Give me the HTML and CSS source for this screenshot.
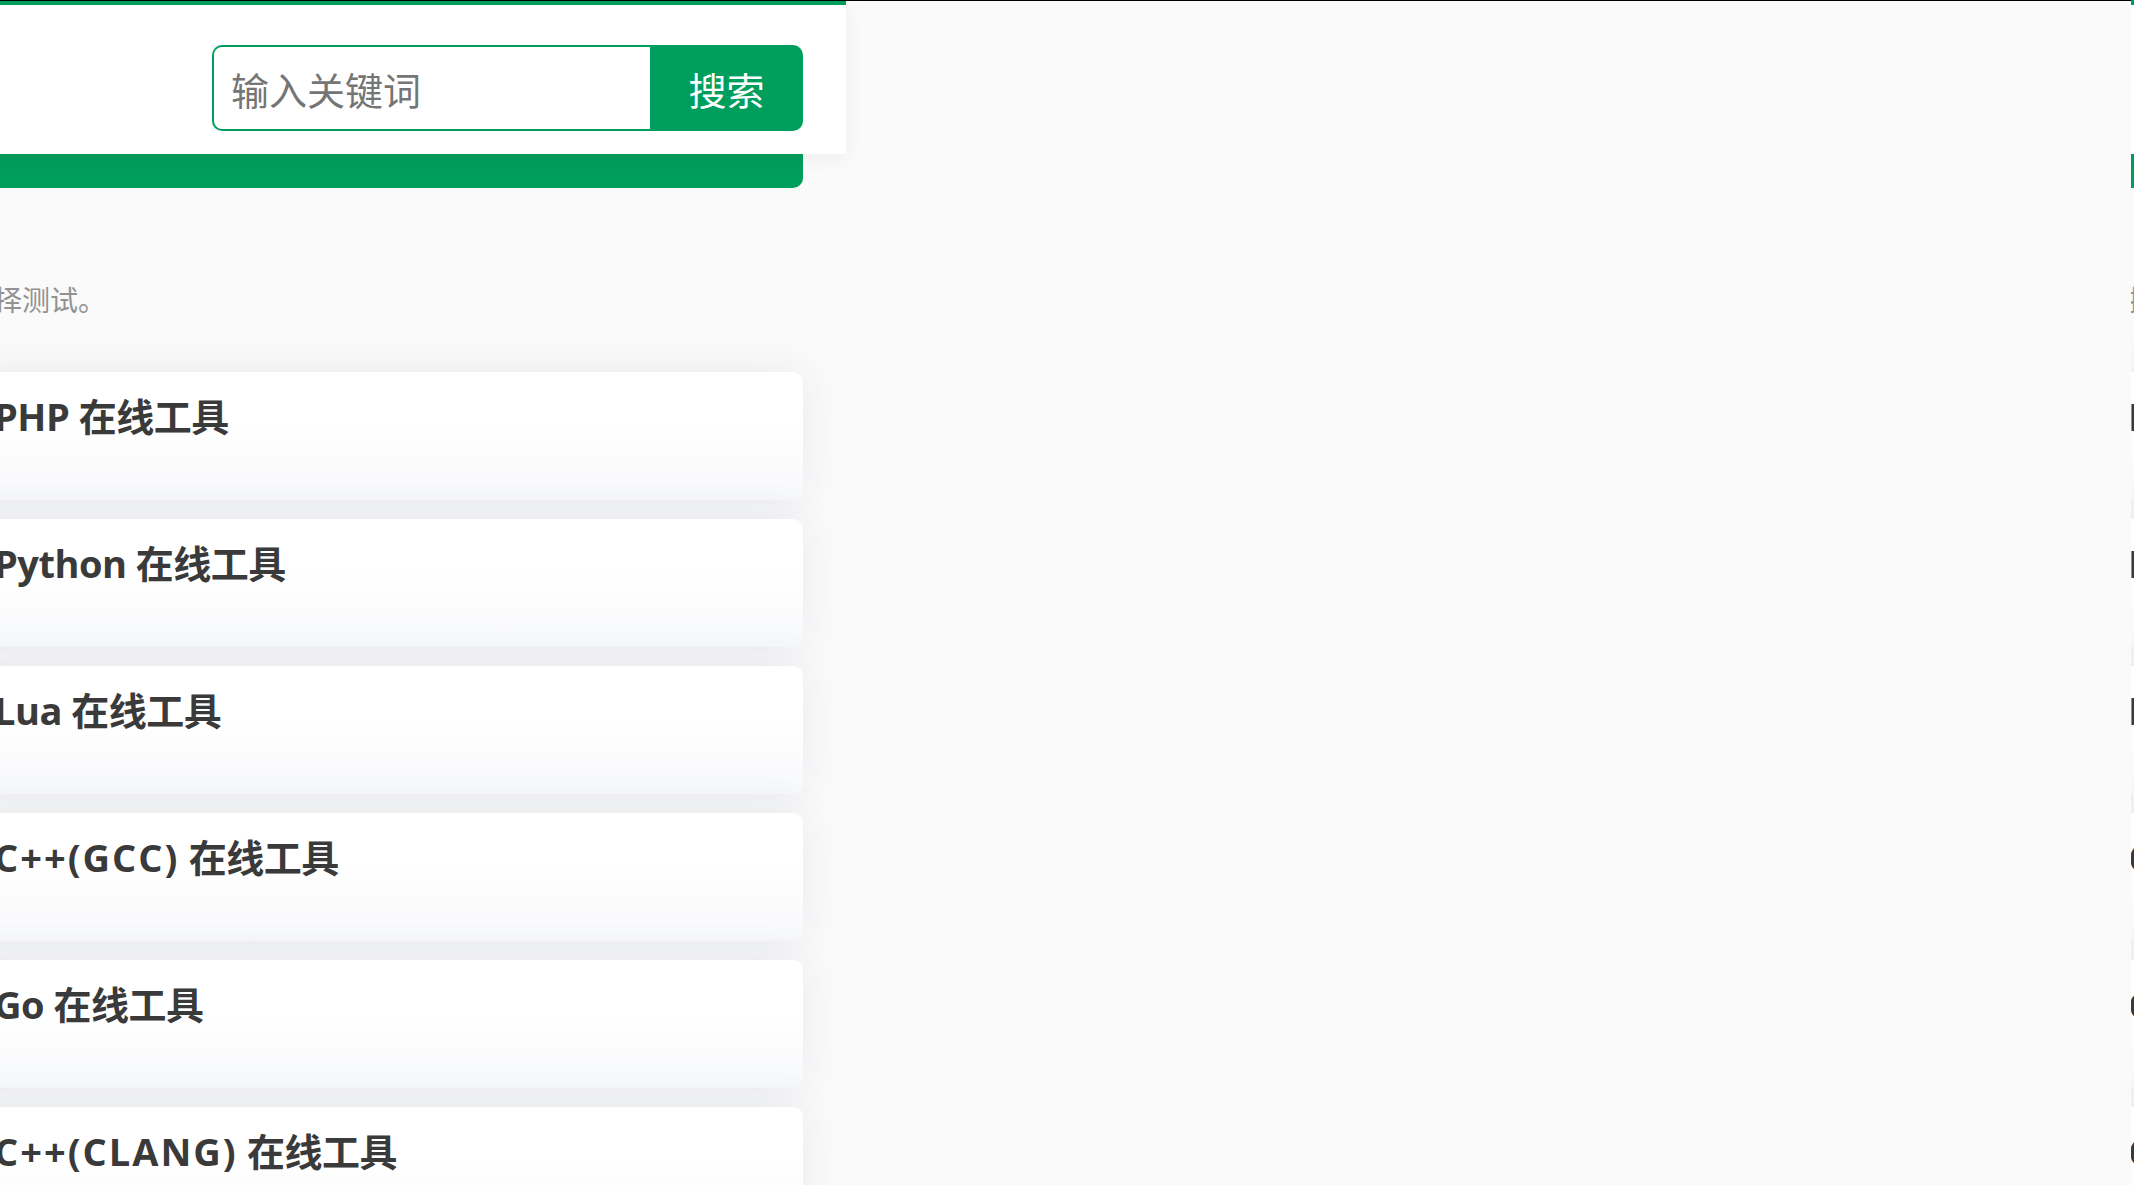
FILE: index.html
```html
<!DOCTYPE html>
<html lang="zh-CN">
<head>
<meta charset="utf-8">
<title>菜鸟工具</title>
<link rel="stylesheet" href="styles.css">
</head>
<body>
<div class="slides">
  <section class="slide slide-a">
    <div class="col">
      <header class="topbar">
        <form class="search">
          <input class="search-input" type="text" placeholder="输入关键词">
          <button class="search-btn" type="button">搜索</button>
        </form>
      </header>
      <div class="banner"></div>
      <p class="desc">支持多种编程语言在线运行，你可以选择测试。</p>
      <ul class="cards">
        <li class="card"><h3 class="card-title">PHP 在线工具</h3></li>
        <li class="card"><h3 class="card-title">Python 在线工具</h3></li>
        <li class="card"><h3 class="card-title">Lua 在线工具</h3></li>
        <li class="card"><h3 class="card-title"><span class="spaced">C++(GCC)</span> 在线工具</h3></li>
        <li class="card"><h3 class="card-title">Go 在线工具</h3></li>
        <li class="card"><h3 class="card-title"><span class="spaced">C++(CLANG)</span> 在线工具</h3></li>
      </ul>
    </div>
  </section>
  <section class="slide slide-b">
    <div class="col">
      <header class="topbar">
        <form class="search">
          <input class="search-input" type="text" placeholder="输入关键词">
          <button class="search-btn" type="button">搜索</button>
        </form>
      </header>
      <div class="banner"></div>
      <p class="desc">支持多种编程语言在线运行，你可以选择测试。</p>
      <ul class="cards">
        <li class="card"><h3 class="card-title">PHP 在线工具</h3></li>
        <li class="card"><h3 class="card-title">Python 在线工具</h3></li>
        <li class="card"><h3 class="card-title">Lua 在线工具</h3></li>
        <li class="card"><h3 class="card-title"><span class="spaced">C++(GCC)</span> 在线工具</h3></li>
        <li class="card"><h3 class="card-title">Go 在线工具</h3></li>
        <li class="card"><h3 class="card-title"><span class="spaced">C++(CLANG)</span> 在线工具</h3></li>
      </ul>
    </div>
  </section>
</div>
</body>
</html>
```

FILE: styles.css
```css
html, body {
  margin: 0;
  padding: 0;
}

body {
  background: #fafafa;
  overflow: hidden;
  font-family: "Noto Sans CJK SC", "Noto Sans", sans-serif;
}

.slides {
  display: flex;
  height: 1185px;
  overflow: hidden;
}

.slide {
  flex: 0 0 auto;
  overflow: hidden;
  position: relative;
  height: 1185px;
}

.slide-a {
  width: 2131px;
}

.slide-a::before {
  content: "";
  position: absolute;
  top: 0;
  left: 0;
  right: 0;
  height: 1px;
  background: #000;
  z-index: 5;
}

.slide-b {
  width: 900px;
}

.col {
  width: 849px;
  margin-left: -46px;
}

.slide-b .col {
  margin-left: -43px;
}

.topbar {
  box-sizing: border-box;
  width: 892px;
  height: 154px;
  background: #fff;
  border-top: 5px solid #009e5c;
  padding: 40px 43px 0 0;
  display: flex;
  justify-content: flex-end;
  align-items: flex-start;
  box-shadow: 0 4px 20px rgba(0, 0, 0, 0.05);
  position: relative;
  z-index: 2;
}

.search {
  display: flex;
  width: 591px;
  height: 86px;
  margin: 0;
}

.search-input {
  flex: 1;
  min-width: 0;
  box-sizing: border-box;
  height: 86px;
  border: 2px solid #009e5c;
  border-right: 0;
  border-radius: 10px 0 0 10px;
  padding: 0 0 0 17px;
  font-family: inherit;
  font-size: 38px;
  color: #333;
  background: #fff;
  outline: none;
}

.search-input::placeholder {
  color: #757575;
}

.search-btn {
  width: 153px;
  height: 86px;
  border: 0;
  border-radius: 0 10px 10px 0;
  background: #009e5c;
  color: #fff;
  font-family: inherit;
  font-size: 38px;
  padding: 0;
}

.banner {
  height: 34px;
  background: #009e5c;
  border-radius: 0 0 10px 10px;
}

.desc {
  margin: 91px 0 0 -476px;
  padding-left: 40px;
  font-size: 28px;
  line-height: 40px;
  color: #929292;
  white-space: nowrap;
}

.cards {
  list-style: none;
  margin: 53px 0 0;
  padding: 0;
  display: flex;
  flex-direction: column;
  gap: 19px;
}

.card {
  box-sizing: border-box;
  height: 128px;
  padding: 22px 40px 0;
  border-radius: 10px;
  background: linear-gradient(#ffffff 40%, #f7f8fa);
  box-shadow: 0 0 44px rgba(40, 50, 100, 0.08);
}

.card-title {
  margin: 0;
  font-family: "Open Sans", "Noto Sans CJK SC", sans-serif;
  font-size: 38px;
  line-height: 44px;
  font-weight: 700;
  color: #3a3a3a;
  white-space: nowrap;
  letter-spacing: -0.5px;
}

.card-title .spaced {
  letter-spacing: 2px;
}
```
